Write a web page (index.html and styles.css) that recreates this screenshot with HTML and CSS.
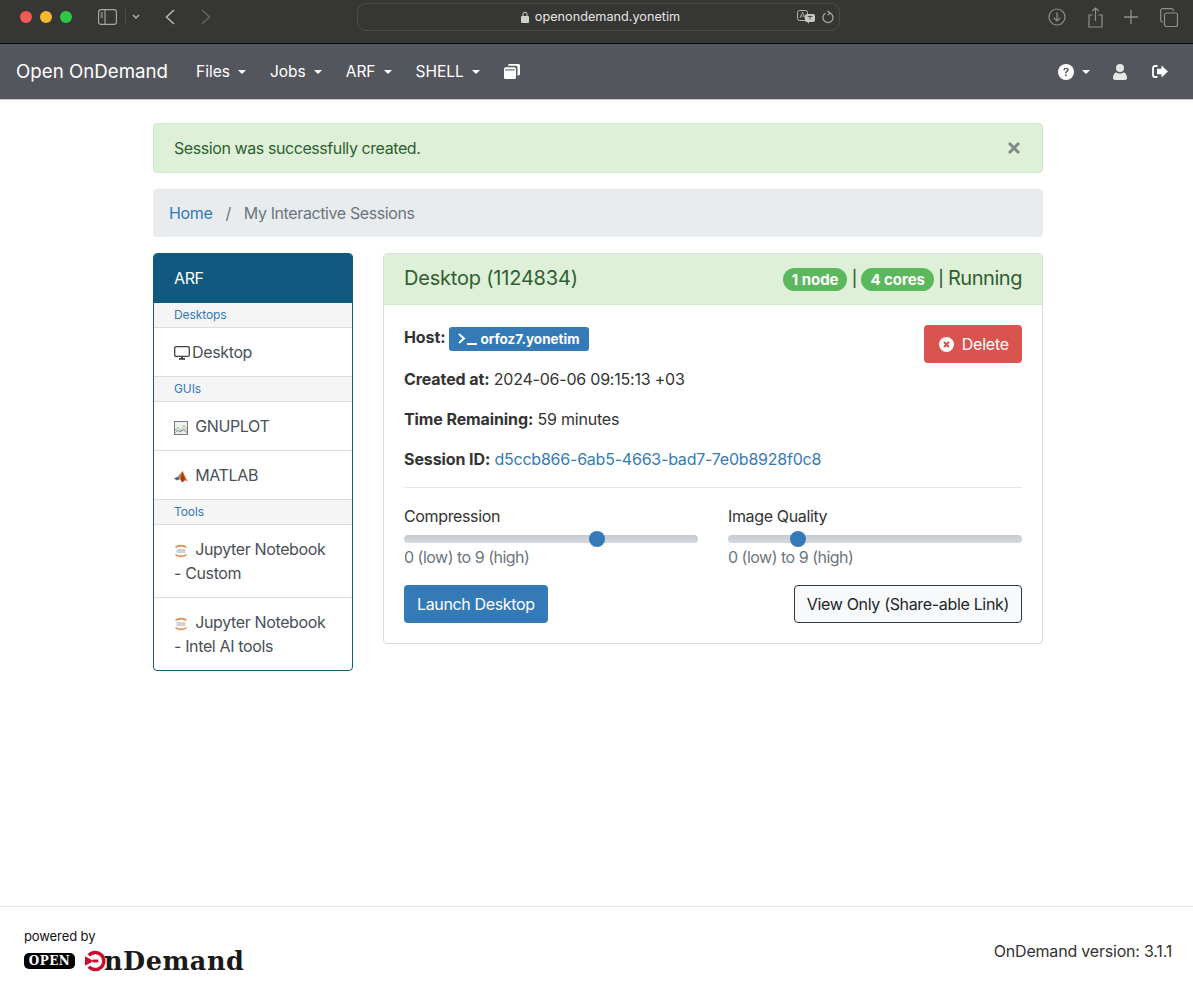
FILE: index.html
```html
<!DOCTYPE html>
<html lang="en">

<head>
    <meta charset="UTF-8">
    <title>Open OnDemand | My Interactive Sessions</title>
    <link rel="stylesheet" href="styles.css">
</head>

<body>
    <!-- browser chrome -->
    <div class="toolbar">
        <div class="traffic">
            <span class="dot red"></span>
            <span class="dot yellow"></span>
            <span class="dot green"></span>
        </div>
        <svg class="tool-sidebar" width="19" height="16" viewBox="0 0 19 16" fill="none" stroke="#a9a9a7" stroke-width="1.1">
            <rect x="0.6" y="0.6" width="17.8" height="14.8" rx="2.5"/>
            <path d="M7 1v14"/>
            <path d="M2.5 4H5M2.5 6H5M2.5 8H5" stroke-width="1"/>
        </svg>
        <span class="tool-divider"></span>
        <svg class="tool-chevron" width="8" height="6" viewBox="0 0 8 6" fill="none" stroke="#b5b5b3" stroke-width="1.4"><path d="M1 1l3 3 3-3"/></svg>
        <svg class="tool-back" width="10" height="16" viewBox="0 0 10 16" fill="none" stroke="#b9b9b7" stroke-width="1.5"><path d="M9 1L1.5 8 9 15"/></svg>
        <svg class="tool-forward" width="10" height="16" viewBox="0 0 10 16" fill="none" stroke="#636361" stroke-width="1.5"><path d="M1 1l7.5 7L1 15"/></svg>
        <div class="urlbar">
            <svg class="url-lock" width="8" height="12" viewBox="0 0 8 12"><path d="M2 5V3.2a2 2 0 0 1 4 0V5" fill="none" stroke="#d0d0ce" stroke-width="1"/><rect y="5" width="8" height="7" rx="1" fill="#d0d0ce"/></svg>
            <span class="url-text">openondemand.yonetim</span>
            <div class="url-tools">
                <svg width="18" height="14" viewBox="0 0 18 14"><rect x="0.5" y="0.5" width="10" height="10" rx="2" fill="none" stroke="#b5b5b3"/><path d="M3 8l2.5-6L8 8M3.9 6h3.2" fill="none" stroke="#b5b5b3" stroke-width=".8"/><rect x="8" y="4" width="10" height="8" rx="2" fill="#c8c8c6"/><path d="M10 11.5l2 2.2v-2.2" fill="#c8c8c6"/><path d="M10.5 6.5h5M13 5.5v4" stroke="#363634" stroke-width=".8"/></svg>
                <svg width="12" height="14" viewBox="0 0 12 14" fill="none" stroke="#b5b5b3" stroke-width="1.1"><path d="M3.4 3.3A5 5 0 1 0 8 3"/><path d="M5.5 0.8L8 3 5.8 5.2"/></svg>
            </div>
        </div>
        <div class="tool-right">
            <svg width="18" height="18" viewBox="0 0 18 18" fill="none" stroke="#8f8f8d" stroke-width="1.2"><circle cx="9" cy="9" r="8"/><path d="M9 4.5V13M5.8 9.8L9 13l3.2-3.2"/></svg>
            <svg width="15" height="21" viewBox="0 0 15 21" fill="none" stroke="#8f8f8d" stroke-width="1.2"><path d="M4.5 8H1v12h13V8h-3.5"/><path d="M7.5 14V1M4.2 4l3.3-3 3.3 3"/></svg>
            <svg width="14" height="14" viewBox="0 0 14 14" fill="none" stroke="#8f8f8d" stroke-width="1.3"><path d="M7 0v14M0 7h14"/></svg>
            <svg width="18" height="19" viewBox="0 0 18 19" fill="none" stroke="#8f8f8d" stroke-width="1.2"><rect x="4.5" y="5" width="13" height="13.5" rx="2"/><path d="M2.8 14A2 2 0 0 1 .7 12V2.6A2 2 0 0 1 2.6.7h8.8A2 2 0 0 1 13.4 3"/></svg>
        </div>
    </div>

    <!-- dashboard navbar -->
    <nav class="navbar">
        <a class="brand">Open OnDemand</a>
        <a class="nav-link">Files<span class="caret"></span></a>
        <a class="nav-link">Jobs<span class="caret"></span></a>
        <a class="nav-link">ARF<span class="caret"></span></a>
        <a class="nav-link">SHELL<span class="caret"></span></a>
        <svg class="nav-cards" width="16" height="15" viewBox="0 0 16 15" fill="#fff">
            <rect x="0" y="3.2" width="12" height="11.8" rx="1.6"/>
            <path d="M4 1.6C4 .7 4.7 0 5.6 0h8.8C15.3 0 16 .7 16 1.6v8.2c0 .9-.7 1.6-1.6 1.6h-.9V3.6c0-1-.9-1.9-1.9-1.9H4z"/>
            <rect x="1.2" y="5.4" width="9.6" height="1" fill="#53565c"/>
        </svg>
        <div class="nav-right">
            <span class="nav-help">
                <svg width="16" height="16" viewBox="0 0 15 15"><circle cx="7.5" cy="7.5" r="7.5" fill="#fff"/><path d="M5 5.8c0-1.5 1.1-2.4 2.6-2.4 1.4 0 2.5.9 2.5 2.1 0 1.9-2.1 1.8-2.1 3.2H6.6c0-2.2 1.9-2 1.9-3.1 0-.5-.4-.8-1-.8-.6 0-1 .4-1.1 1z" fill="#53565c"/><rect x="6.6" y="9.8" width="1.5" height="1.6" fill="#53565c"/></svg>
                <span class="caret"></span>
            </span>
            <svg class="nav-user" width="14" height="16" viewBox="0 0 14 16" fill="#e6e6e6"><circle cx="7" cy="4" r="4"/><path d="M0 14c0-3.6 2-5.6 3.4-5.6 1 .7 2.2 1 3.6 1s2.6-.3 3.6-1C12 8.4 14 10.4 14 14c0 1.3-.9 2-2 2H2c-1.100 0-2-.7-2-2z"/></svg>
            <svg class="nav-exit" width="16" height="13" viewBox="0 0 16 13" fill="#fff"><path d="M5.5 1H3a2 2 0 0 0-2 2v7a2 2 0 0 0 2 2h2.5" fill="none" stroke="#fff" stroke-width="1.8"/><path d="M9.5 0.5L16 6.5l-6.500 6V9.300H5V3.700h4.500z"/></svg>
        </div>
    </nav>

    <main class="container">
        <div class="alert">
            <span>Session was successfully created.</span>
            <svg class="alert-close" width="12" height="12" viewBox="0 0 12 12" stroke="#7f8a80" stroke-width="3"><path d="M1 1l10 10M11 1L1 11"/></svg>
        </div>

        <div class="breadcrumb">
            <a class="link">Home</a>
            <span class="crumb-sep">/</span>
            <span class="crumb-active">My Interactive Sessions</span>
        </div>

        <div class="columns">
            <aside class="sidebar">
                <div class="sidebar-head">ARF</div>
                <div class="sidebar-group">Desktops</div>
                <a class="sidebar-item">
                    <svg class="icon-monitor" width="16" height="14" viewBox="0 0 16 14" fill="none" stroke="#3a3f45" stroke-width="1.3"><rect x=".7" y=".7" width="14.6" height="9.6" rx="1.3"/><path d="M5 12.8h6M8 10.500v2" stroke-width="1.8"/></svg><span>Desktop</span>
                </a>
                <div class="sidebar-group">GUIs</div>
                <a class="sidebar-item">
                    <svg class="app-icon" width="14" height="14" viewBox="0 0 14 14" fill="none"><rect x=".5" y=".5" width="13" height="13" fill="#eef2ee" stroke="#77737f"/><path d="M1 10l3-4 3 4 3-6 3 5" stroke="#8ecf92"/><path d="M1 12l3-3 3 2 3-3 3 3" stroke="#d98a9a"/><path d="M1 8l4 3 4-2 4 3" stroke="#8a8fd8" stroke-width=".7"/></svg>
                    <span>GNUPLOT</span>
                </a>
                <a class="sidebar-item">
                    <svg class="app-icon" width="14" height="14" viewBox="0 0 14 14"><path d="M0 8.5l4-2L6 9l-3 1.5z" fill="#3f6f8f"/><path d="M4 6.5L8.5 1 14 12l-3-2-3 2.500z" fill="#d9722a"/><path d="M8.5 1L7 8.5l1 4 3-2.500z" fill="#a83a1c"/></svg>
                    <span>MATLAB</span>
                </a>
                <div class="sidebar-group">Tools</div>
                <a class="sidebar-item">
                    <svg class="app-icon" width="14" height="14" viewBox="0 0 14 14" fill="none"><path d="M1.500 3.500c2.500-2.500 8.500-2.500 11 0M1.500 10.500c2.500 2.500 8.500 2.500 11 0" stroke="#e08a4f" stroke-width="1.6"/><path d="M2.500 6h9M2.500 8h9" stroke="#9a9a9a" stroke-width=".9"/></svg>
                    <span>Jupyter Notebook - Custom</span>
                </a>
                <a class="sidebar-item">
                    <svg class="app-icon" width="14" height="14" viewBox="0 0 14 14" fill="none"><path d="M1.500 3.500c2.500-2.500 8.500-2.500 11 0M1.500 10.500c2.500 2.500 8.500 2.500 11 0" stroke="#e08a4f" stroke-width="1.6"/><path d="M2.500 6h9M2.500 8h9" stroke="#9a9a9a" stroke-width=".9"/></svg>
                    <span>Jupyter Notebook - Intel AI tools</span>
                </a>
            </aside>

            <section class="panel">
                <div class="panel-head">
                    <span class="panel-title">Desktop (1124834)</span>
                    <div class="panel-status">
                        <span class="pill">1 node</span>
                        <span class="pipe">|</span>
                        <span class="pill">4 cores</span>
                        <span class="pipe">|</span>
                        <span class="state">Running</span>
                    </div>
                </div>
                <div class="panel-body">
                    <div class="session-top">
                        <div class="session-info">
                            <p class="host-row"><strong>Host:</strong>
                                <a class="host-badge">
                                    <svg width="19" height="12" viewBox="0 0 19 12" fill="none" stroke="#fff" stroke-width="2"><path d="M1 1l5 4.500L1 10"/><path d="M9 11h10"/></svg>
                                    orfoz7.yonetim
                                </a>
                            </p>
                            <p class="num"><strong>Created at:</strong> 2024-06-06 09:15:13 +03</p>
                            <p class="num"><strong>Time Remaining:</strong> 59 minutes</p>
                            <p class="num"><strong>Session ID:</strong> <a class="link">d5ccb866-6ab5-4663-bad7-7e0b8928f0c8</a></p>
                        </div>
                        <a class="btn btn-delete">
                            <svg width="15" height="15" viewBox="0 0 15 15"><circle cx="7.5" cy="7.5" r="7.5" fill="#fff"/><path d="M5 5l5 5M10 5l-5 5" stroke="#d9534f" stroke-width="2.2"/></svg>
                            Delete
                        </a>
                    </div>
                    <hr class="rule">
                    <div class="sliders">
                        <div class="slider-box">
                            <div class="slider-label">Compression</div>
                            <div class="slider-track"><span class="slider-thumb" style="left: 65.6%"></span></div>
                            <div class="slider-help">0 (low) to 9 (high)</div>
                        </div>
                        <div class="slider-box">
                            <div class="slider-label">Image Quality</div>
                            <div class="slider-track"><span class="slider-thumb" style="left: 23.8%"></span></div>
                            <div class="slider-help">0 (low) to 9 (high)</div>
                        </div>
                    </div>
                    <div class="actions">
                        <a class="btn btn-launch">Launch Desktop</a>
                        <a class="btn btn-share">View Only (Share-able Link)</a>
                    </div>
                </div>
            </section>
        </div>
    </main>

    <footer class="footer">
        <div class="footer-logo">
            <div class="powered">powered by</div>
            <div class="logo-row">
                <span class="logo-open">OPEN</span>
                <svg class="logo-mark" width="21" height="22" viewBox="0 0 22 22">
                    <path d="M4 5a9 9 0 1 1 0 12" fill="none" stroke="#c8102e" stroke-width="3.6"/>
                    <path d="M0 6l9 5-9 5z" fill="#c8102e"/>
                    <path d="M8 11h6" stroke="#c8102e" stroke-width="3"/>
                </svg>
                <span class="logo-word">nDemand</span>
            </div>
        </div>
        <div class="footer-version">OnDemand version: 3.1.1</div>
    </footer>
</body>
</html>
```

FILE: styles.css
```css
* {
    box-sizing: border-box;
}

html,
body {
    height: 990px;
}

body {
    margin: 0;
    background-color: #fff;
    color: #333;
    font-family: Inter, 'Liberation Sans', sans-serif;
    font-size: 16px;
    line-height: 24px;
    letter-spacing: -0.36px;
    display: flex;
    flex-direction: column;
    overflow: hidden;
}

a {
    text-decoration: none;
}

strong {
    letter-spacing: -0.1px;
}

.link {
    color: #337ab7;
}

/* browser chrome */
.toolbar {
    height: 44px;
    flex: none;
    background-color: #363634;
    border-bottom: 1px solid #0c0c0c;
    display: flex;
    align-items: center;
    padding: 0 0 9px 20px;
    letter-spacing: 0;
}

.traffic {
    display: flex;
    gap: 8px;
}

.dot {
    width: 12px;
    height: 12px;
    border-radius: 50%;
}

.red { background-color: #f25a54; }
.yellow { background-color: #f7b731; }
.green { background-color: #2fc845; }

.tool-sidebar { margin-left: 26px; }

.tool-divider {
    width: 1px;
    height: 16px;
    background-color: #4a4a48;
    margin-left: 8px;
}

.tool-chevron { margin-left: 6px; }
.tool-back { margin-left: 25px; }
.tool-forward { margin-left: 26px; }

.urlbar {
    width: 483px;
    height: 28px;
    margin-left: 146px;
    border: 1px solid #4c4c4a;
    border-radius: 9px;
    position: relative;
    display: flex;
    align-items: center;
    justify-content: center;
    gap: 6px;
    color: #e4e4e2;
    font-size: 12.7px;
    padding-left: 4px;
}

.url-tools {
    position: absolute;
    right: 5px;
    top: 6px;
    display: flex;
    gap: 7px;
    align-items: center;
}

.tool-right {
    margin-left: auto;
    width: 130px;
    margin-right: 15px;
    display: flex;
    justify-content: space-between;
    align-items: center;
}

/* navbar */
.navbar {
    height: 56px;
    flex: none;
    background-color: #53565c;
    border-bottom: 1px solid #c7c7c7;
    color: #fff;
    display: flex;
    align-items: center;
    padding: 0 25px 0 16px;
    letter-spacing: 0;
}

.brand {
    font-size: 18.7px;
    margin-right: 28px;
}

.nav-link {
    font-size: 15.5px;
    margin-right: 24px;
}

.caret {
    display: inline-block;
    margin-left: 8px;
    vertical-align: 3px;
    border-top: 4px solid #fff;
    border-left: 4px solid transparent;
    border-right: 4px solid transparent;
}

.nav-right {
    margin-left: auto;
    display: flex;
    align-items: center;
    gap: 23px;
}

.nav-help {
    display: flex;
    align-items: center;
}

.nav-exit {
    margin-left: 2px;
}

/* main */
.container {
    width: 890px;
    margin: 23px 0 0 153px;
    flex: 1;
}

.alert {
    height: 50px;
    background-color: #dff0d8;
    border: 1px solid #d0e9c6;
    border-radius: 4px;
    color: #2f5f30;
    letter-spacing: -0.42px;
    padding: 0 22px 0 20px;
    display: flex;
    align-items: center;
    justify-content: space-between;
    margin-bottom: 16px;
}

.breadcrumb {
    height: 48px;
    background-color: #e9ecef;
    border-radius: 4px;
    padding: 0 16px;
    display: flex;
    align-items: center;
    margin-bottom: 16px;
}

.crumb-sep {
    color: #6c757d;
    margin: 0 13px;
}

.crumb-active {
    color: #6c757d;
    letter-spacing: -0.39px;
}

.columns {
    display: flex;
    align-items: flex-start;
    gap: 30px;
}

/* sidebar */
.sidebar {
    width: 200px;
    flex: none;
    border: 1px solid #0f5a7e;
    border-radius: 4px;
    overflow: hidden;
}

.sidebar-head {
    height: 50px;
    margin: -1px -1px 0;
    background-color: #0f5a7e;
    color: #fff;
    padding: 13px 21px;
}

.sidebar-group {
    height: 25px;
    background-color: #f5f5f5;
    border-bottom: 1px solid #ddd;
    color: #337ab7;
    font-size: 12px;
    letter-spacing: -0.1px;
    line-height: 24px;
    padding-left: 20px;
}

.sidebar-item {
    display: block;
    padding: 12px 20px;
    color: #495057;
    border-bottom: 1px solid #ddd;
}

.sidebar-item:last-child {
    border-bottom: none;
}

.icon-monitor {
    vertical-align: -2px;
    margin-right: 2px;
}

.app-icon {
    vertical-align: -3px;
    margin-right: 3px;
}

/* session panel */
.panel {
    flex: 1;
    border: 1px solid #ddd;
    border-radius: 4px;
    overflow: hidden;
}

.panel-head {
    height: 51px;
    background-color: #dff0d8;
    border-bottom: 1px solid #d0e9c6;
    color: #2f5f30;
    font-size: 20px;
    padding: 0 20px 2px;
    display: flex;
    align-items: center;
    justify-content: space-between;
}

.panel-title {
    letter-spacing: -0.2px;
}

.panel-status {
    display: flex;
    align-items: center;
}

.pill {
    background-color: #5cb85c;
    color: #fff;
    font-size: 15px;
    font-weight: 700;
    letter-spacing: -0.05px;
    line-height: 23px;
    border-radius: 12px;
    padding: 0 9px;
    margin-top: 2px;
}

.pipe {
    font-size: 16px;
    font-weight: 500;
    width: 14px;
    text-align: center;
}

.state {
    letter-spacing: -0.45px;
}

.panel-body {
    padding: 20px;
}

.session-top {
    display: flex;
    justify-content: space-between;
    align-items: flex-start;
}

.session-info p {
    margin: 0 0 16px;
}

.session-info p:last-child {
    margin-bottom: 0;
}

.session-info .host-row {
    display: flex;
    align-items: flex-start;
    gap: 4px;
}

.num {
    letter-spacing: -0.22px;
}

.host-badge {
    background-color: #337ab7;
    color: #fff;
    font-size: 13.5px;
    font-weight: 700;
    letter-spacing: 0;
    line-height: 24px;
    border-radius: 3px;
    padding: 0 9px;
    margin-top: 2px;
    display: flex;
    align-items: center;
    gap: 3px;
}

.btn {
    display: inline-block;
    border-radius: 4px;
    height: 38px;
    line-height: 36px;
    padding: 0 12px;
    color: #fff;
    font-size: 16px;
    border: 1px solid transparent;
}

.btn-delete {
    background-color: #d9534f;
    padding: 0 12px 0 14px;
    letter-spacing: -0.2px;
}

.btn-delete svg {
    vertical-align: -2px;
    margin-right: 3px;
}

.btn-launch {
    background-color: #337ab7;
}

.btn-share {
    background-color: #f8f9fa;
    border-color: #343a40;
    color: #212529;
    letter-spacing: -0.33px;
}

.rule {
    border: 0;
    border-top: 1px solid #e5e5e5;
    margin: 16px 0;
}

.sliders {
    display: grid;
    grid-template-columns: 294px 294px;
    justify-content: space-between;
}

.slider-track {
    height: 8px;
    margin: 7px 0 2px;
    background-color: #ced4da;
    background-image: linear-gradient(#c6cbd1, #d6dade);
    border-radius: 4px;
    position: relative;
}

.slider-thumb {
    position: absolute;
    top: -4px;
    width: 16px;
    height: 16px;
    margin-left: -8px;
    border-radius: 50%;
    background-color: #337ab7;
}

.slider-help {
    color: #6c757d;
    letter-spacing: -0.5px;
}

.actions {
    display: flex;
    justify-content: space-between;
    margin-top: 16px;
}

/* footer */
.footer {
    height: 84px;
    flex: none;
    border-top: 1px solid #e5e5e5;
    display: flex;
    justify-content: space-between;
    align-items: center;
    padding: 4px 21px 0 24px;
}

.powered {
    font-size: 13px;
    line-height: 16px;
    letter-spacing: -0.1px;
    color: #111;
}

.logo-row {
    display: flex;
    align-items: center;
    margin-top: 5px;
    height: 24px;
}

.logo-open {
    background-color: #000;
    color: #fff;
    font-family: 'DejaVu Serif', serif;
    font-size: 12px;
    font-weight: 700;
    letter-spacing: .5px;
    line-height: 16px;
    border-radius: 5px;
    width: 51px;
    text-align: center;
}

.logo-mark {
    margin-left: 10px;
}

.logo-word {
    font-family: 'DejaVu Serif', serif;
    font-weight: 700;
    font-size: 25.5px;
    letter-spacing: .5px;
    line-height: 24px;
    color: #1a1a1a;
    margin-left: -2px;
}

.footer-version {
    letter-spacing: -0.2px;
}
```
